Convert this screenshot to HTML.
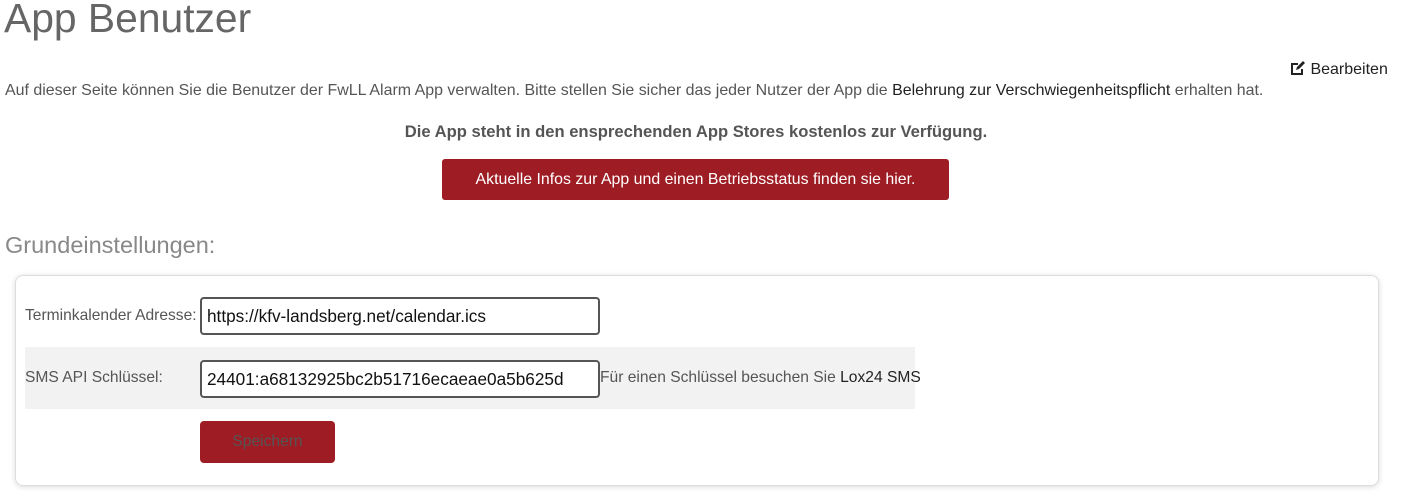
<!DOCTYPE html>
<html><head><meta charset="utf-8"><style>
body{margin:0;width:1406px;height:504px;background:#fff;font-family:"Liberation Sans",sans-serif;color:#555;position:relative;overflow:hidden}
.a{position:absolute;white-space:nowrap}
h1{position:absolute;left:4px;top:-5px;margin:0;font-weight:normal;font-size:40.8px;color:#666;letter-spacing:0}
.p{font-size:15.95px;color:#555}
.btn{position:absolute;background:#9e1c24;color:#fff;border-radius:3px;text-align:center}
.card{position:absolute;left:15px;top:275px;width:1362px;height:209px;border:1px solid #ddd;border-radius:8px;box-shadow:0 1px 6px rgba(0,0,0,.15)}
.inp{position:absolute;border:2px solid #555;border-radius:4px;background:#fff;color:#111;font-size:17.2px;box-sizing:border-box;padding:7px 5px;height:38px}
.f{font-size:15.6px;color:#555}
</style></head><body>
<h1>App Benutzer</h1>
<div class="a" style="left:1289px;top:60px;font-size:16px;color:#222">
<svg width="17" height="16" viewBox="0 0 17 16" style="vertical-align:-2px"><path d="M2 3h7v2H4v8h8V9h2v6H2z" fill="#222"/><path d="M7 10l1-3 6-6 2 2-6 6z" fill="#222"/></svg> Bearbeiten</div>
<div class="a p" style="left:5px;top:82px">Auf dieser Seite können Sie die Benutzer der FwLL Alarm App verwalten. Bitte stellen Sie sicher das jeder Nutzer der App die <span style="color:#222">Belehrung zur Verschwiegenheitspflicht</span> erhalten hat.</div>
<div class="a" style="left:0;width:1392px;text-align:center;top:122px;font-weight:bold;font-size:16.6px;color:#555">Die App steht in den ensprechenden App Stores kostenlos zur Verfügung.</div>
<div class="btn" style="left:442px;top:159px;width:507px;height:41px;line-height:41px;color:#fff;font-size:15.9px">Aktuelle Infos zur App und einen Betriebsstatus finden sie hier.</div>
<div class="a" style="left:5px;top:232px;font-size:23.5px;color:#888">Grundeinstellungen:</div>
<div class="card"></div>
<div class="a f" style="left:25px;top:307px">Terminkalender Adresse:</div>
<div class="inp" style="left:200px;top:297px;width:400px">https://kfv-landsberg.net/calendar.ics</div>
<div class="a" style="left:25px;top:347px;width:890px;height:62px;background:#f2f2f2"></div>
<div class="a f" style="left:25px;top:369px">SMS API Schlüssel:</div>
<div class="inp" style="left:200px;top:360px;width:400px">24401:a68132925bc2b51716ecaeae0a5b625d</div>
<div class="a f" style="left:600px;top:369px">Für einen Schlüssel besuchen Sie <span style="color:#222">Lox24 SMS</span></div>
<div class="btn f" style="left:200px;top:421px;width:135px;height:42px;line-height:42px;color:#555;border-radius:4px">Speichern</div>
</body></html>
